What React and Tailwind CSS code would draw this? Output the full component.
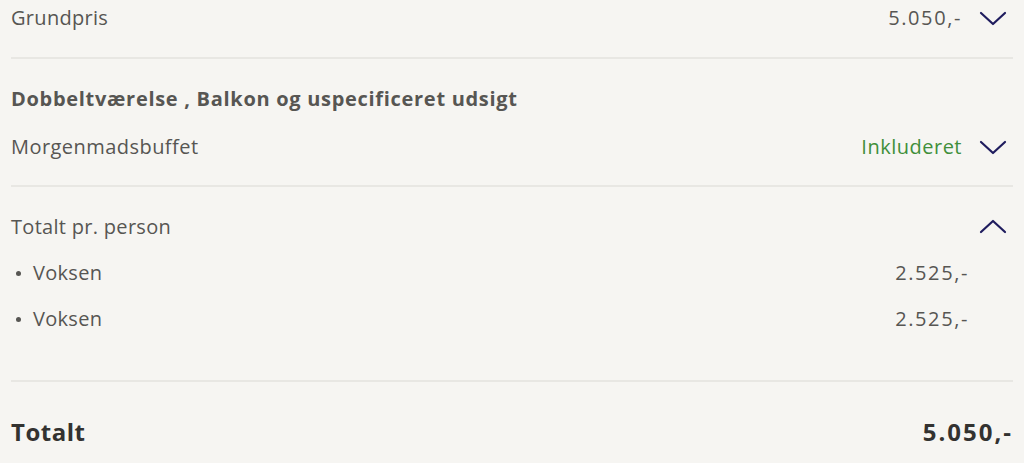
import { useState } from "react";

function Chevron({ up }) {
    return (
        <svg width="28" height="16" viewBox="0 0 28 16" fill="none" className={up ? "rotate-180" : ""}>
            <path d="M2 3 L14 14 L26 3" stroke="#1f1c5e" strokeWidth="2.2" strokeLinecap="round" strokeLinejoin="round" />
        </svg>
    )
}

const persons = [
    { label: "Voksen", price: "2.525,-" },
    { label: "Voksen", price: "2.525,-" },
];

export default function App() {
    const [open, setOpen] = useState(true);

    return (
        <div className="w-[1024px] h-[463px] overflow-hidden bg-[#f6f5f2] px-[11px] text-[20px] tracking-[0.3px] text-[#575653]" style={{ fontFamily: "'Open Sans', 'Noto Sans', sans-serif" }}>
            <div className="flex items-center justify-between h-[24px] mt-[6px] mb-[27px]">
                <span>Grundpris</span>
                <div className="flex items-center gap-[17px] pr-[6px]">
                    <span className="tracking-[1.6px]">5.050,-</span>
                    <Chevron />
                </div>
            </div>
            <div className="border-t-2 border-[#e8e7e3]" />

            <div className="pt-[28px] pb-[26px]">
                <div className="font-bold h-[24px] leading-[24px] tracking-[0.7px]">Dobbeltværelse , Balkon og uspecificeret udsigt</div>
                <div className="flex items-center justify-between h-[24px] mt-[24px]">
                    <span className="tracking-[0.45px]">Morgenmadsbuffet</span>
                    <div className="flex items-center gap-[17px] pr-[6px]">
                        <span className="text-[#3f8f3a] tracking-[0.5px]">Inkluderet</span>
                        <Chevron />
                    </div>
                </div>
            </div>
            <div className="border-t-2 border-[#e8e7e3]" />

            <div className="pt-[28px] pb-[49px]">
                <div className="flex items-center justify-between h-[24px] cursor-pointer" onClick={() => setOpen(!open)}>
                    <span>Totalt pr. person</span>
                    <div className="pr-[6px]"><Chevron up={open} /></div>
                </div>
                {open && (
                    <ul className="mt-[22px] flex flex-col gap-[22px]">
                        {persons.map((p, i) => (
                            <li key={i} className="flex items-center justify-between h-[24px] pr-[44px]">
                                <span className="flex items-center">
                                    <span className="w-[5px] h-[5px] rounded-full bg-[#575653] ml-[5px] mr-[12px]" />
                                    {p.label}
                                </span>
                                <span className="tracking-[1.6px]">{p.price}</span>
                            </li>
                        ))}
                    </ul>
                )}
            </div>
            <div className="border-t-2 border-[#e8e7e3]" />

            <div className="flex items-center justify-between h-[28px] mt-[36px] text-[24px] font-bold text-[#333230]">
                <span className="tracking-[0.5px]">Totalt</span>
                <span className="tracking-[2px]">5.050,-</span>
            </div>
        </div>
    )
}
